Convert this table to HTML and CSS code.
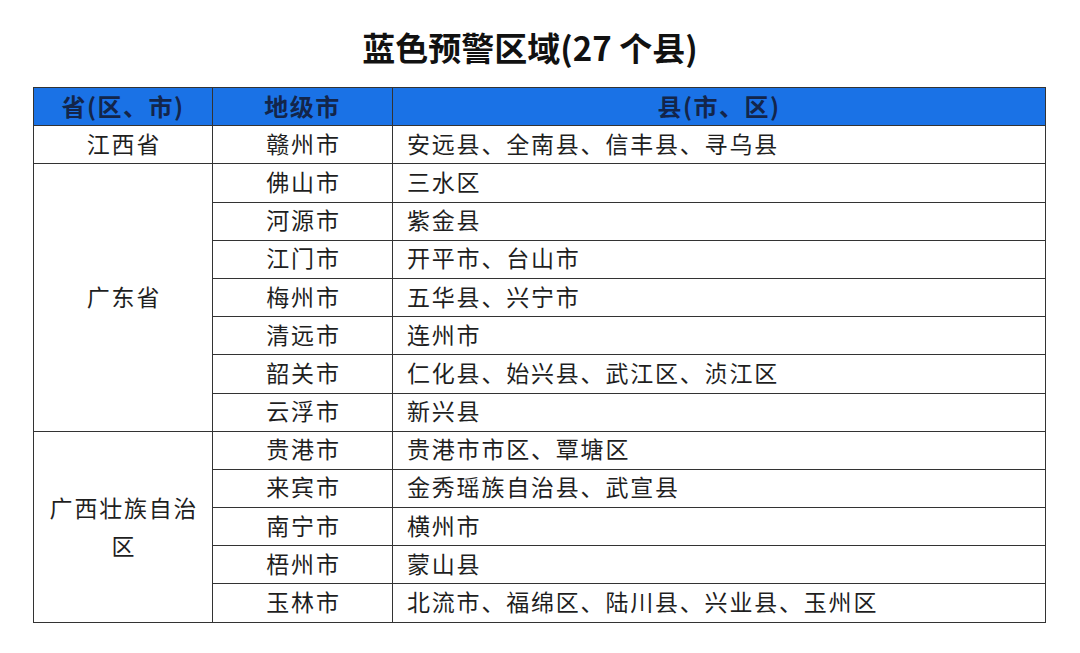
FILE: index.html
```html
<!DOCTYPE html>
<html lang="zh-CN">
<head>
<meta charset="utf-8">
<link rel="stylesheet" href="styles.css">
</head>
<body>
<h1 class="title">蓝色预警区域(27 个县)</h1>
<table class="warn">
  <colgroup>
    <col class="c1"><col class="c2"><col class="c3">
  </colgroup>
  <thead>
    <tr><th>省(区、市)</th><th>地级市</th><th>县(市、区)</th></tr>
  </thead>
  <tbody>
    <tr><td class="ctr">江西省</td><td class="ctr">赣州市</td><td>安远县、全南县、信丰县、寻乌县</td></tr>
    <tr><td class="ctr" rowspan="7">广东省</td><td class="ctr">佛山市</td><td>三水区</td></tr>
    <tr><td class="ctr">河源市</td><td>紫金县</td></tr>
    <tr><td class="ctr">江门市</td><td>开平市、台山市</td></tr>
    <tr><td class="ctr">梅州市</td><td>五华县、兴宁市</td></tr>
    <tr><td class="ctr">清远市</td><td>连州市</td></tr>
    <tr><td class="ctr">韶关市</td><td>仁化县、始兴县、武江区、浈江区</td></tr>
    <tr><td class="ctr">云浮市</td><td>新兴县</td></tr>
    <tr><td class="ctr wrap" rowspan="5">广西壮族自治区</td><td class="ctr">贵港市</td><td>贵港市市区、覃塘区</td></tr>
    <tr><td class="ctr">来宾市</td><td>金秀瑶族自治县、武宣县</td></tr>
    <tr><td class="ctr">南宁市</td><td>横州市</td></tr>
    <tr><td class="ctr">梧州市</td><td>蒙山县</td></tr>
    <tr><td class="ctr">玉林市</td><td>北流市、福绵区、陆川县、兴业县、玉州区</td></tr>
  </tbody>
</table>
</body>
</html>
```

FILE: styles.css
```css
html, body {
  margin: 0;
  padding: 0;
  background: #ffffff;
}
body {
  font-family: "Noto Sans CJK SC", "Noto Sans", sans-serif;
  color: #1f1f1f;
}
.title {
  margin: 0;
  padding: 25px 20px 0 0;
  height: 87px;
  box-sizing: border-box;
  text-align: center;
  font-size: 33px;
  line-height: 44px;
  font-weight: 700;
  color: #111;
}
.warn {
  margin-left: 33px;
  width: 1012px;
  border-collapse: collapse;
  table-layout: fixed;
}
.c1 { width: 179px; }
.c2 { width: 180px; }
.c3 { width: 653px; }
.warn th, .warn td {
  border: 1.5px solid #333;
  height: 38.2px;
  padding: 0 0 3px 0;
  box-sizing: border-box;
  font-size: 23px;
  line-height: 27px;
  letter-spacing: 1.8px;
  vertical-align: middle;
}
.warn th {
  background: #1a72e6;
  color: #13254a;
  font-weight: 700;
  font-size: 24px;
  text-align: center;
  letter-spacing: 1.5px;
}
.warn td {
  text-align: left;
  padding-left: 14px;
  font-weight: 400;
}
.warn td.ctr {
  text-align: center;
  padding-left: 2px;
}
.warn td.wrap {
  padding: 0 10px 2px 12px;
  line-height: 38px;
}
```
